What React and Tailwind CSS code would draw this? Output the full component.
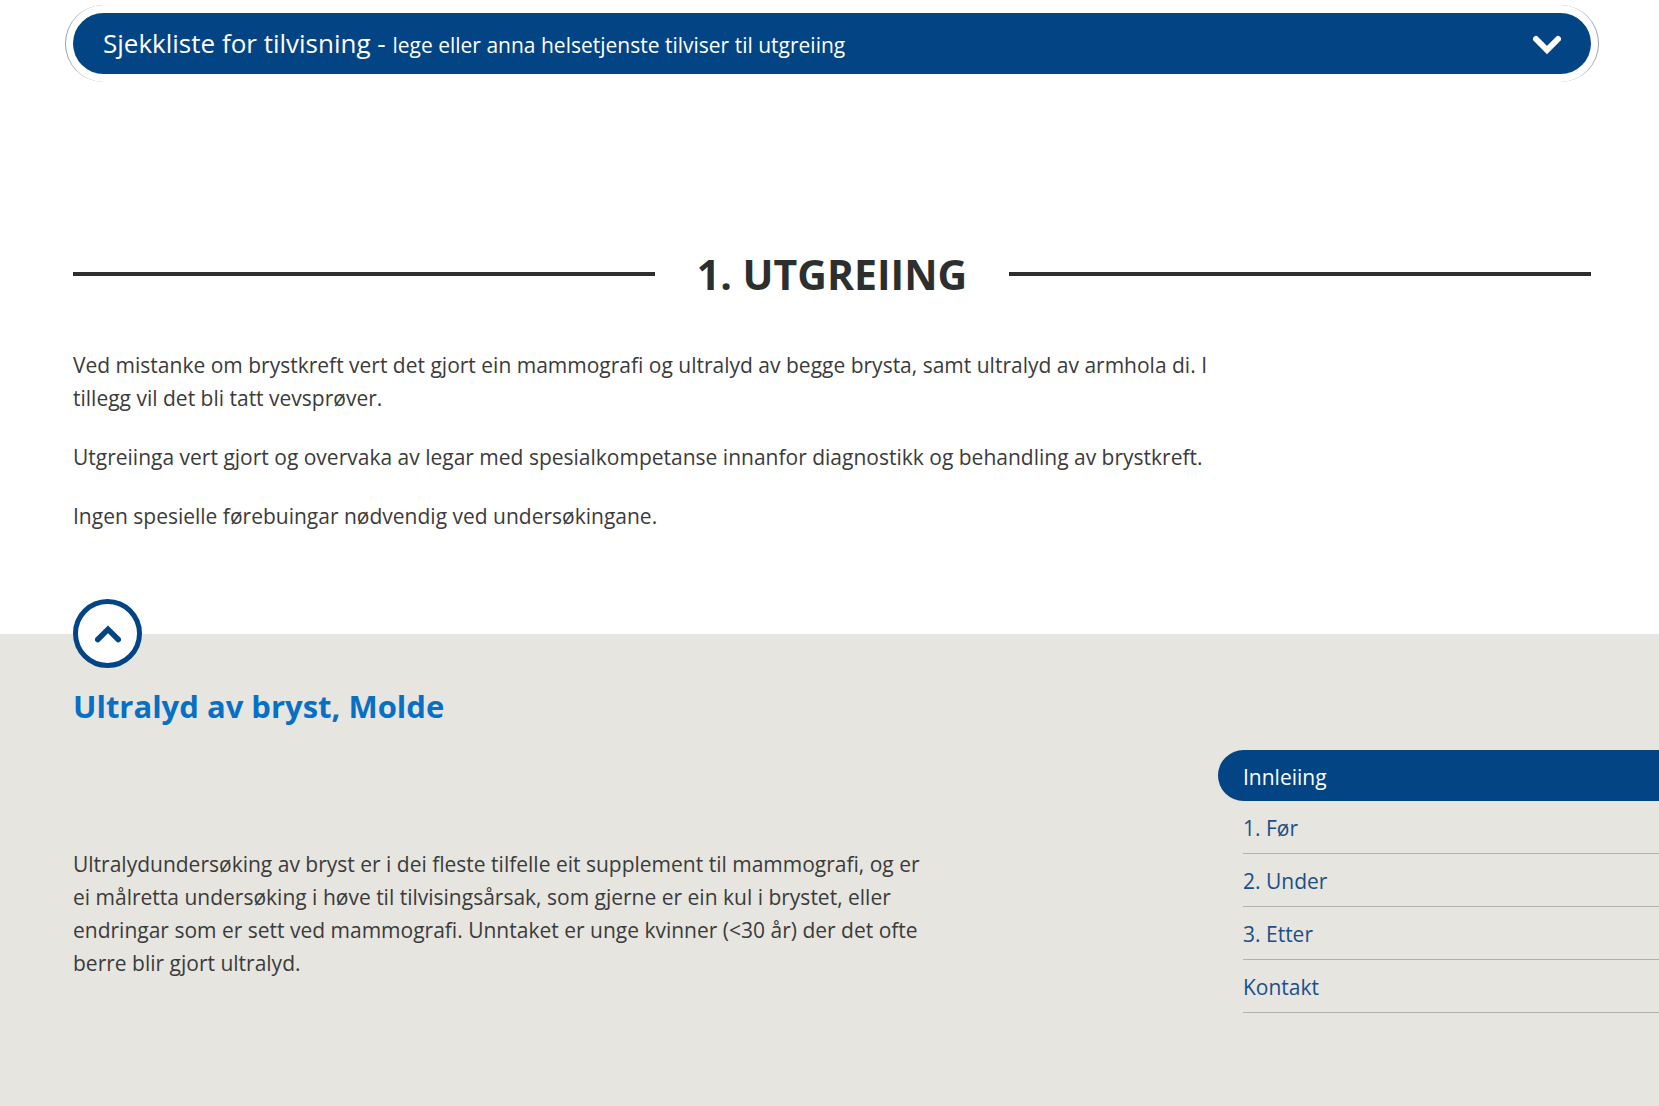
import { useState } from 'react';

const menuItems = [
  { id: 'innleiing', label: 'Innleiing' },
  { id: 'for', label: '1. Før' },
  { id: 'under', label: '2. Under' },
  { id: 'etter', label: '3. Etter' },
  { id: 'kontakt', label: 'Kontakt' },
];

function Chevron({ className }) {
  return (
    <svg viewBox="0 0 28 20" fill="none" stroke="currentColor" strokeLinecap="round" className={className} aria-hidden="true">
      <path d="M3 4 L14 15 L25 4" strokeWidth="6" strokeLinejoin="miter" />
    </svg>
  );
}

function ChecklistToggle() {
  return (
    <div className="-mx-2 rounded-full border-x border-gray-400 px-[7px] py-2">
      <button
        type="button"
        aria-expanded="false"
        className="flex h-[61px] w-full items-center justify-between rounded-full bg-[#034584] px-[30px] pt-[2px] text-left text-white"
      >
        <span className="text-[26px]">
          Sjekkliste for tilvisning - <span className="text-[21px]">lege eller anna helsetjenste tilviser til utgreiing</span>
        </span>
        <Chevron className="h-5 w-7" />
      </button>
    </div>
  );
}

function SideMenu() {
  const [active, setActive] = useState('innleiing');

  return (
    <nav aria-label="Innhald" className="w-[441px] shrink-0 pt-[116px]">
      <ul>
        {menuItems.map((item) => (
          <li key={item.id}>
            <a
              href={`#${item.id}`}
              onClick={() => setActive(item.id)}
              className={
                item.id === active
                  ? 'flex h-[51px] items-center rounded-l-full bg-[#034584] pt-[3px] pl-[25px] text-white'
                  : 'ml-[25px] flex h-[53px] items-center border-b border-[#b0b0ac] pt-[3px] text-[#1c4f88]'
              }
            >
              {item.label}
            </a>
          </li>
        ))}
      </ul>
    </nav>
  );
}

export default function App() {
  return (
    <div className="flex min-h-screen flex-col bg-white font-['Open_Sans','Noto_Sans',sans-serif] text-[21px] leading-[33px] text-[#3b3b3b]">
      <main className="pl-[73px] pr-[68px] pt-[5px]">
        <ChecklistToggle />

        <div className="mt-[160px] flex items-center gap-[42px]">
          <span className="h-1 flex-1 bg-[#2d2f2f]" />
          <h2 className="text-[41px] leading-[64px] font-bold text-[#2d2f2f] uppercase">1. Utgreiing</h2>
          <span className="h-1 flex-1 bg-[#2d2f2f]" />
        </div>

        <div className="mt-[43px] flex max-w-[1138px] flex-col gap-[26px] pb-[101px]">
          <p>
            Ved mistanke om brystkreft vert det gjort ein mammografi og ultralyd av begge brysta, samt ultralyd av armhola
            di. I tillegg vil det bli tatt vevsprøver.
          </p>
          <p>Utgreiinga vert gjort og overvaka av legar med spesialkompetanse innanfor diagnostikk og behandling av brystkreft.</p>
          <p>Ingen spesielle førebuingar nødvendig ved undersøkingane.</p>
        </div>
      </main>

      <section className="relative flex flex-1 justify-between bg-[#e6e5e0] pl-[73px]">
        {/* Collapse button sits on the section edge */}
        <button
          type="button"
          aria-label="Lukk"
          className="absolute -top-[35px] left-[73px] flex size-[69px] items-center justify-center rounded-full border-5 border-[#034584] bg-white text-[#034584]"
        >
          <Chevron className="h-5 w-[26px] rotate-180" />
        </button>

        <div className="max-w-[850px] pt-[50px]">
          <h3 className="text-[31px] leading-[44px] font-bold text-[#0770c4]">
            <a href="#ultralyd">Ultralyd av bryst, Molde</a>
          </h3>
          <p className="mt-[120px]">
            Ultralydundersøking av bryst er i dei fleste tilfelle eit supplement til mammografi, og er ei målretta
            undersøking i høve til tilvisingsårsak, som gjerne er ein kul i brystet, eller endringar som er sett ved
            mammografi. Unntaket er unge kvinner (&lt;30 år) der det ofte berre blir gjort ultralyd.
          </p>
        </div>

        <SideMenu />
      </section>
    </div>
  );
}
